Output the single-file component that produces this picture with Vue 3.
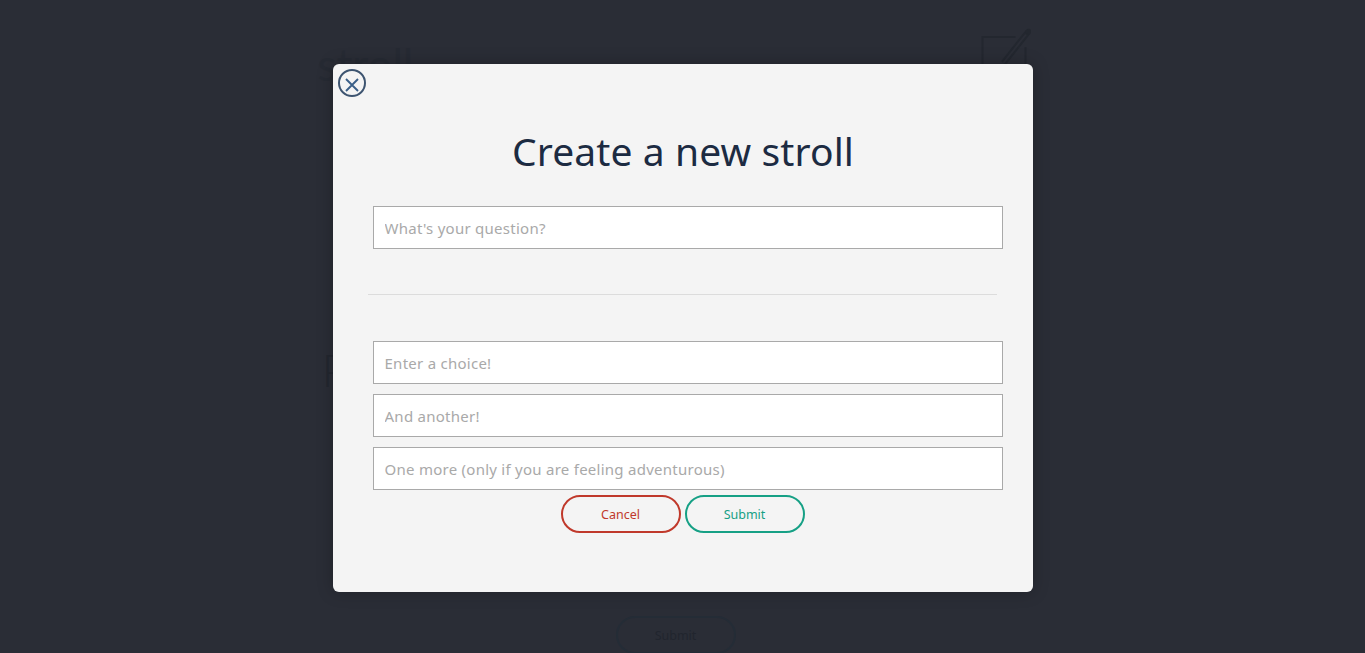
<template>
  <div class="page">
    <div class="behind">
      <div class="behind-top">
        <span class="behind-title">stroll</span>
        <svg class="behind-icon" width="52" height="52" viewBox="0 0 52 52" fill="none">
          <path d="M36.5 11H3.5v40h43V21" stroke="#23272f" stroke-width="2" />
          <path d="M24.5 37 49 6" stroke="#23272f" stroke-width="6" />
          <path d="M24.5 37 47 8.5" stroke="#2a2d36" stroke-width="2" />
          <circle cx="49.5" cy="5.5" r="2.8" fill="#23272f" />
        </svg>
      </div>
      <div class="behind-letter">P</div>
      <button class="behind-submit">Submit</button>
    </div>
    <div class="overlay">
      <div class="modal">
        <button class="close" aria-label="Close">
          <svg width="30" height="30" viewBox="0 0 30 30" fill="none">
            <circle cx="15" cy="15" r="13" stroke="#3d5470" stroke-width="2" />
            <path d="M9 11 21 23M21 11 9 23" stroke="#3a5f88" stroke-width="1.9" />
          </svg>
        </button>
        <h1 class="title">Create a new stroll</h1>
        <input class="field" type="text" placeholder="What's your question?" />
        <hr class="divider" />
        <div class="choices">
          <input
            v-for="choice in choices"
            :key="choice"
            class="field"
            type="text"
            :placeholder="choice"
          />
        </div>
        <div class="actions">
          <button class="btn cancel">Cancel</button>
          <button class="btn submit">Submit</button>
        </div>
      </div>
    </div>
  </div>
</template>

<script setup>
const choices = [
  'Enter a choice!',
  'And another!',
  'One more (only if you are feeling adventurous)',
];
</script>

<style>
html,
body {
  margin: 0;
  height: 100%;
  overflow: hidden;
  background: #2a2d36;
}
</style>

<style scoped>
.page {
  position: relative;
  height: 653px;
  overflow: hidden;
  background: #2a2d36;
  font-family: "Noto Sans", "Open Sans", sans-serif;
}
.behind {
  width: 710px;
  margin: 0 auto;
  height: 653px;
  display: flex;
  flex-direction: column;
  align-items: center;
}
.behind-top {
  align-self: stretch;
  display: flex;
  justify-content: space-between;
  height: 80px;
  padding-top: 26px;
  box-sizing: border-box;
}
.behind-title {
  font-family: Lato, sans-serif;
  font-weight: 400;
  font-size: 44px;
  line-height: 50px;
  margin: 13px 0 0 -10px;
  color: #262a33;
}
.behind-icon {
  margin-right: 7px;
}
.behind-letter {
  align-self: flex-start;
  margin: 265px 0 0 -6px;
  font-family: Lato, sans-serif;
  font-weight: 300;
  font-size: 46px;
  line-height: 50px;
  color: #23272f;
}
.behind-submit {
  margin-top: auto;
  margin-bottom: -1px;
  width: 120px;
  height: 38px;
  border: 2px solid #242c36;
  border-radius: 19px;
  background: transparent;
  color: #21252e;
  font-family: inherit;
  font-size: 12.5px;
  transform: translateX(-7px);
}
.overlay {
  position: absolute;
  inset: 0;
  display: flex;
  justify-content: center;
  align-items: flex-start;
  padding-top: 64px;
}
.modal {
  position: relative;
  width: 700px;
  height: 528px;
  box-sizing: border-box;
  padding: 64px 30px 0 40px;
  background: #f4f4f4;
  border-radius: 6px;
  box-shadow: 0 0 16px rgba(0, 0, 0, 0.25);
}
.close {
  position: absolute;
  left: 4px;
  top: 4px;
  padding: 0;
  width: 30px;
  height: 30px;
  border: 0;
  background: none;
}
.close svg {
  display: block;
}
.title {
  margin: 0 0 30px -9px;
  height: 48px;
  text-align: center;
  font-size: 39px;
  line-height: 45px;
  letter-spacing: 0.1px;
  font-weight: 400;
  color: #1c2b42;
}
.field {
  display: block;
  width: 630px;
  height: 43px;
  box-sizing: border-box;
  padding: 0 11px;
  border: 1px solid #a9a9a9;
  border-radius: 0;
  background: #fff;
  font-family: inherit;
  font-size: 15px;
  letter-spacing: 0.26px;
  outline: none;
}
.field::placeholder {
  color: #a9a9a9;
  opacity: 1;
}
.divider {
  width: 629px;
  height: 1px;
  margin: 45px 0 46px -5px;
  border: 0;
  background: #dcdcdc;
}
.choices {
  display: flex;
  flex-direction: column;
  gap: 10px;
}
.actions {
  display: flex;
  justify-content: center;
  gap: 4px;
  width: 620px;
  margin-top: 5px;
}
.btn {
  width: 120px;
  height: 38px;
  border-radius: 19px;
  border: 2px solid;
  background: transparent;
  font-family: inherit;
  font-size: 12.5px;
}
.cancel {
  color: #c0392b;
  border-color: #c0392b;
}
.submit {
  color: #16a085;
  border-color: #16a085;
}
</style>
